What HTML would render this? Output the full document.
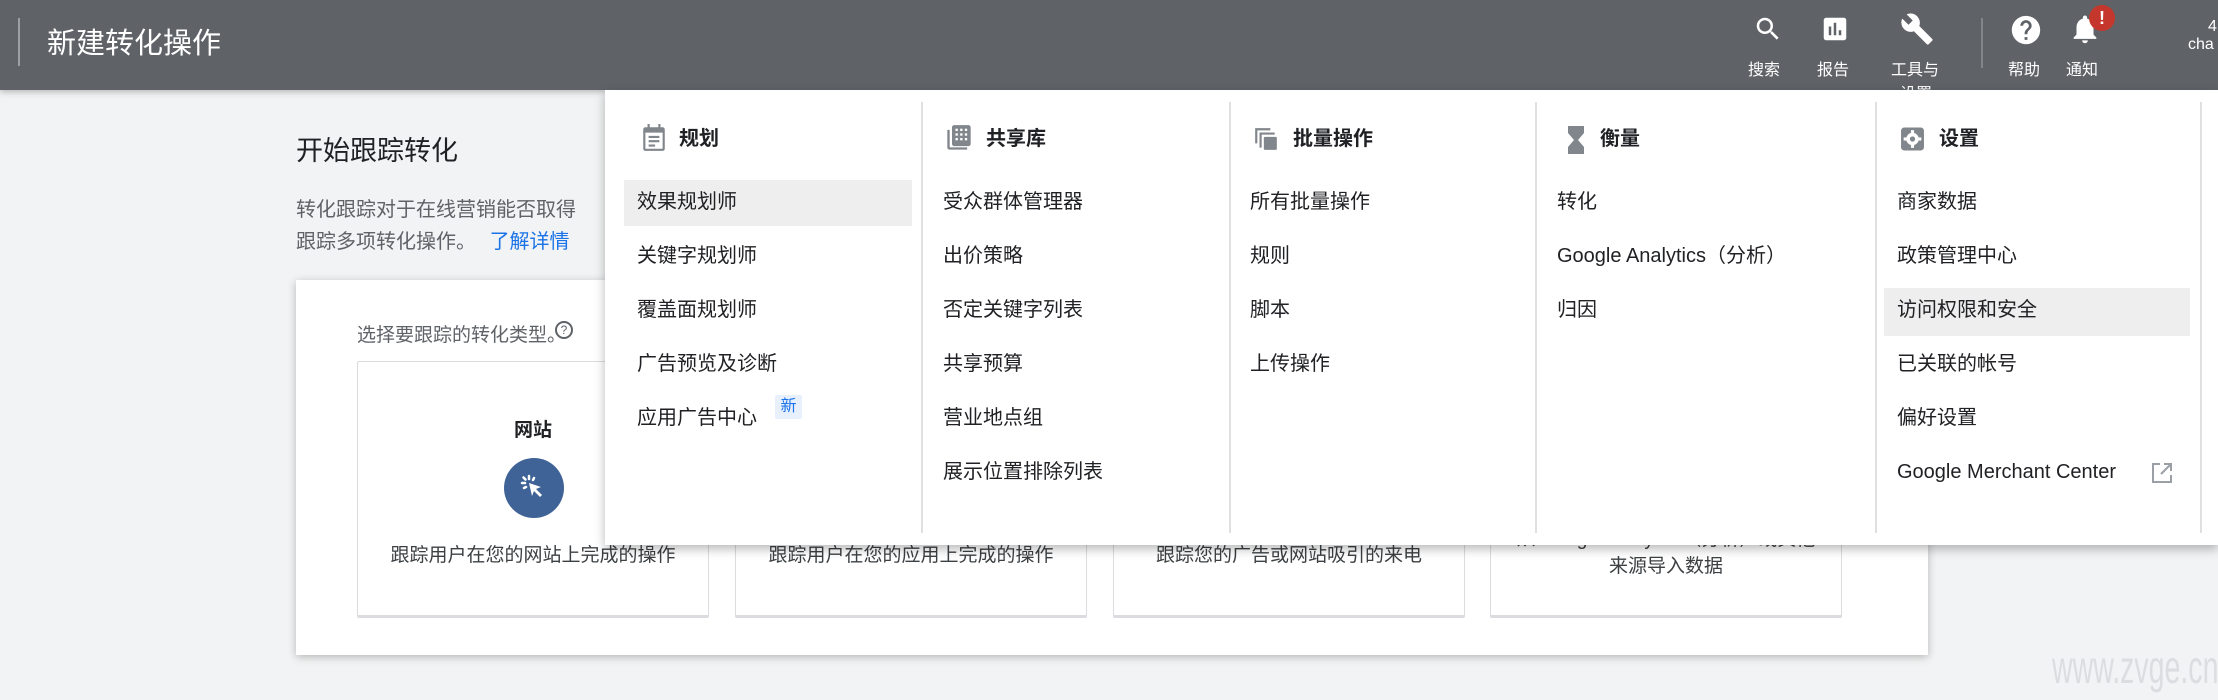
<!DOCTYPE html>
<html><head><meta charset="utf-8"><style>
*{margin:0;padding:0;box-sizing:border-box}
body{width:2218px;height:700px;overflow:hidden;background:#f1f3f4;font-family:"Liberation Sans","Noto Sans CJK SC",sans-serif;position:relative;color:#202124}
.abs{position:absolute}
.hdr{left:0;top:0;width:2218px;height:90px;background:#5f6368;box-shadow:0 2px 6px rgba(0,0,0,.25);z-index:3}
.tl{color:#fff;font-size:16px;text-align:center;white-space:nowrap}
.card{left:296px;top:280px;width:1632px;height:375px;background:#fff;box-shadow:0 2px 8px rgba(0,0,0,.25)}
.opt{top:361px;width:352px;height:257px;border:1px solid #dadce0;border-bottom:3px solid #dadce0;border-radius:2px;background:#fff}
.optt{position:absolute;left:0;width:100%;text-align:center;font-size:19px;color:#3c4043}
.menu{left:605px;top:90px;width:1613px;height:455px;background:#fff;box-shadow:0 4px 10px rgba(0,0,0,.28);z-index:4}
.div{position:absolute;top:12px;height:431px;width:2px;background:#e0e0e0}
.mh{position:absolute;font-size:20px;font-weight:bold;color:#202124;top:35px;line-height:28px}
.mi{position:absolute;font-size:20px;color:#202124;white-space:nowrap;line-height:28px}
.hl{position:absolute;background:#eeeeee}
</style></head><body>
<div class="abs hdr">
 <div class="abs" style="left:18px;top:18px;width:2px;height:48px;background:#9aa0a6"></div>
 <div class="abs" style="left:47px;top:20px;font-size:29px;color:#fff">新建转化操作</div>
 <svg class="abs" style="left:1753px;top:14px" width="30" height="30" viewBox="0 0 24 24"><path fill="#fff" d="M15.5 14h-.79l-.28-.27A6.47 6.47 0 0 0 16 9.5 6.5 6.5 0 1 0 9.5 16c1.610 0 3.09-.59 4.23-1.57l.27.28v.79l5 4.99L20.49 19l-4.99-5zm-6 0C7.01 14 5 11.99 5 9.5S7.01 5 9.5 5 14 7.01 14 9.5 11.99 14 9.5 14z"/></svg>
 <div class="abs tl" style="left:1748px;top:56px">搜索</div>
 <svg class="abs" style="left:1820px;top:14px" width="30" height="30" viewBox="0 0 24 24"><path fill="#fff" d="M19 3H5c-1.1 0-2 .9-2 2v14c0 1.1.9 2 2 2h14c1.1 0 2-.9 2-2V5c0-1.1-.9-2-2-2zM9 17H7v-7h2v7zm4 0h-2V7h2v10zm4 0h-2v-4h2v4z"/></svg>
 <div class="abs tl" style="left:1817px;top:56px">报告</div>
 <svg class="abs" style="left:1900px;top:12px" width="34" height="34" viewBox="0 0 24 24"><path fill="#fff" d="M22.7 19l-9.1-9.1c.9-2.3.4-5-1.5-6.9-2-2-5-2.4-7.400-1.3L9 6 6 9 1.6 4.7C.4 7.1.9 10.1 2.9 12.1c1.9 1.9 4.6 2.4 6.9 1.5l9.1 9.1c.4.4 1 .4 1.4 0l2.3-2.3c.5-.4.5-1.1.1-1.4z"/></svg>
 <div class="abs tl" style="left:1891px;top:56px">工具与</div>
 <div class="abs tl" style="left:1900px;top:80px">设置</div>
 <div class="abs" style="left:1981px;top:18px;width:2px;height:50px;background:#80868b"></div>
 <svg class="abs" style="left:2009px;top:13px" width="34" height="34" viewBox="0 0 24 24"><path fill="#fff" d="M12 2C6.48 2 2 6.48 2 12s4.48 10 10 10 10-4.48 10-10S17.52 2 12 2zm1 17h-2v-2h2v2zm2.07-7.75l-.9.92C13.45 12.9 13 13.5 13 15h-2v-.5c0-1.1.45-2.1 1.17-2.83l1.24-1.26c.37-.36.59-.86.59-1.41 0-1.1-.9-2-2-2s-2 .9-2 2H8c0-2.21 1.79-4 4-4s4 1.79 4 4c0 .88-.36 1.68-.93 2.25z"/></svg>
 <div class="abs tl" style="left:2008px;top:56px">帮助</div>
 <svg class="abs" style="left:2068px;top:12px" width="34" height="34" viewBox="0 0 24 24"><path fill="#fff" d="M12 22c1.1 0 2-.9 2-2h-4c0 1.1.9 2 2 2zm6-6v-5c0-3.07-1.63-5.64-4.5-6.32V4c0-.83-.67-1.5-1.5-1.5s-1.5.67-1.5 1.5v.68C7.64 5.36 6 7.92 6 11v5l-2 2v1h16v-1l-2-2z"/></svg>
 <div class="abs" style="left:2089px;top:5px;width:26px;height:26px;border-radius:50%;background:#c5372c;color:#fff;font-weight:bold;font-size:18px;text-align:center;line-height:26px">!</div>
 <div class="abs tl" style="left:2066px;top:56px">通知</div>
 <div class="abs tl" style="left:2208px;top:18px">4</div>
 <div class="abs tl" style="left:2188px;top:36px">cha</div>
</div>

<div class="abs" style="left:296px;top:129px;font-size:27px;color:#202124">开始跟踪转化</div>
<div class="abs" style="left:296px;top:194px;font-size:20px;color:#5f6368;line-height:32px">转化跟踪对于在线营销能否取得<br>跟踪多项转化操作。 <span style="color:#1a73e8;margin-left:8px">了解详情</span></div>

<div class="abs card">
 <div class="abs" style="left:61px;top:40px;font-size:19px;color:#5f6368">选择要跟踪的转化类型。</div>
 <div class="abs" style="left:259px;top:41px;width:18px;height:18px;border:2px solid #5f6368;border-radius:50%;font-size:12px;text-align:center;line-height:14px;color:#5f6368">?</div>
</div>
<div class="abs opt" style="left:357px">
 <div class="optt" style="top:53px;font-weight:bold;color:#202124">网站</div>
 <div class="abs" style="left:146px;top:96px;width:60px;height:60px;border-radius:50%;background:#3f6396"></div>
 <svg class="abs" style="left:160px;top:110px" width="32" height="32" viewBox="0 0 32 32"><g stroke="#fff" stroke-width="2.5" stroke-linecap="round"><line x1="11" y1="4" x2="11" y2="7"/><line x1="4" y1="11" x2="7" y2="11"/><line x1="5.5" y1="5.5" x2="7.5" y2="7.5"/><line x1="16" y1="6" x2="15" y2="8"/><line x1="6" y1="16" x2="8" y2="15"/></g><path fill="#fff" d="M11 11l12 4-5 2 6 6-2 2-6-6-2 5z"/></svg>
 <div class="optt" style="top:178px">跟踪用户在您的网站上完成的操作</div>
</div>
<div class="abs opt" style="left:735px"><div class="optt" style="top:178px">跟踪用户在您的应用上完成的操作</div></div>
<div class="abs opt" style="left:1113px"><div class="optt" style="top:178px">跟踪您的广告或网站吸引的来电</div></div>
<div class="abs opt" style="left:1490px"><div class="optt" style="top:162px">从 Google Analytics（分析）或其他<br>来源导入数据</div></div>

<div class="abs" style="right:0;top:640px;font-size:46px;color:#dcdde0;font-family:'Liberation Sans Narrow','Liberation Sans',sans-serif;transform:scaleX(.62);transform-origin:right;white-space:nowrap">www.zvge.cn</div>

<div class="abs menu">
 <div class="div" style="left:316px"></div><div class="div" style="left:624px"></div><div class="div" style="left:930px"></div><div class="div" style="left:1270px"></div><div class="div" style="left:1595px"></div>
 <div class="hl" style="left:19px;top:90px;width:288px;height:46px"></div>
 <div class="hl" style="left:1279px;top:198px;width:306px;height:48px"></div>
 <svg class="abs" style="left:36px;top:34px" width="26" height="28" viewBox="0 0 24 26"><path fill="#80868b" d="M4 3h16c1.1 0 2 .9 2 2v18c0 1.1-.9 2-2 2H4c-1.1 0-2-.9-2-2V5c0-1.1.9-2 2-2zm0 5v15h16V8zM6 0h2v4H6zM16 0h2v4h-2zM7 11h10v2H7zm0 4h10v2H7zm0 4h6v2H7z"/></svg>
 <div class="mh" style="left:74px">规划</div>
 <div class="mi" style="left:32px;top:98px">效果规划师</div>
 <div class="mi" style="left:32px;top:152px">关键字规划师</div>
 <div class="mi" style="left:32px;top:206px">覆盖面规划师</div>
 <div class="mi" style="left:32px;top:260px">广告预览及诊断</div>
 <div class="mi" style="left:32px;top:314px">应用广告中心</div>
 <div class="abs" style="left:170px;top:305px;width:27px;height:24px;background:#e8f0fe;color:#1a73e8;font-size:16px;text-align:center;line-height:24px;border-radius:2px">新</div>
 <svg class="abs" style="left:340px;top:34px" width="28" height="28" viewBox="0 0 24 24"><path fill="#80868b" d="M2 5h2v15h15v2H4c-1.1 0-2-.9-2-2zM8 1h12c1.1 0 2 .9 2 2v14c0 1.1-.9 2-2 2H8c-1.1 0-2-.9-2-2V3c0-1.1.9-2 2-2z"/><g fill="#fff"><rect x="9" y="4" width="2" height="2"/><rect x="13" y="4" width="2" height="2"/><rect x="17" y="4" width="2" height="2"/><rect x="9" y="8" width="2" height="2"/><rect x="13" y="8" width="2" height="2"/><rect x="17" y="8" width="2" height="2"/><rect x="9" y="12" width="2" height="2"/><rect x="13" y="12" width="2" height="2"/><rect x="17" y="12" width="2" height="2"/></g></svg>
 <div class="mh" style="left:381px">共享库</div>
 <div class="mi" style="left:338px;top:98px">受众群体管理器</div>
 <div class="mi" style="left:338px;top:152px">出价策略</div>
 <div class="mi" style="left:338px;top:206px">否定关键字列表</div>
 <div class="mi" style="left:338px;top:260px">共享预算</div>
 <div class="mi" style="left:338px;top:314px">营业地点组</div>
 <div class="mi" style="left:338px;top:368px">展示位置排除列表</div>
 <svg class="abs" style="left:648px;top:36px" width="26" height="26" viewBox="0 0 24 24"><path fill="#80868b" d="M2 2h2v14H2zM2 2h14v2H2zM6 6h2v14H6zM6 6h14v2H6zM11 10h10c.6 0 1 .4 1 1v10c0 .6-.4 1-1 1H11c-.6 0-1-.4-1-1V11c0-.6.4-1 1-1z"/></svg>
 <div class="mh" style="left:688px">批量操作</div>
 <div class="mi" style="left:645px;top:98px">所有批量操作</div>
 <div class="mi" style="left:645px;top:152px">规则</div>
 <div class="mi" style="left:645px;top:206px">脚本</div>
 <div class="mi" style="left:645px;top:260px">上传操作</div>
 <svg class="abs" style="left:962px;top:36px" width="18" height="28" viewBox="0 0 18 28"><path fill="#80868b" d="M1 0h16v7l-6 7 6 7v7H1v-7l6-7-6-7z"/></svg>
 <div class="mh" style="left:995px">衡量</div>
 <div class="mi" style="left:952px;top:98px">转化</div>
 <div class="mi" style="left:952px;top:152px">Google Analytics（分析）</div>
 <div class="mi" style="left:952px;top:206px">归因</div>
 <svg class="abs" style="left:1295px;top:36px" width="25" height="26" viewBox="0 0 24 24"><rect x="1" y="1" width="22" height="22" rx="3" fill="#80868b"/><circle cx="12" cy="12" r="6" fill="#fff"/><circle cx="12" cy="12" r="2.5" fill="#80868b"/><g fill="#fff"><rect x="10.5" y="3.5" width="3" height="4"/><rect x="10.5" y="16.5" width="3" height="4"/><rect x="3.5" y="10.5" width="4" height="3"/><rect x="16.5" y="10.5" width="4" height="3"/></g></svg>
 <div class="mh" style="left:1334px">设置</div>
 <div class="mi" style="left:1292px;top:98px">商家数据</div>
 <div class="mi" style="left:1292px;top:152px">政策管理中心</div>
 <div class="mi" style="left:1292px;top:206px">访问权限和安全</div>
 <div class="mi" style="left:1292px;top:260px">已关联的帐号</div>
 <div class="mi" style="left:1292px;top:314px">偏好设置</div>
 <div class="mi" style="left:1292px;top:368px">Google Merchant Center</div>
 <svg class="abs" style="left:1545px;top:371px" width="24" height="24" viewBox="0 0 24 24"><path fill="none" stroke="#9aa0a6" stroke-width="2" d="M10 3H3v18h18v-7M14 3h7v7M21 3L11 13"/></svg>
</div>
</body></html>
